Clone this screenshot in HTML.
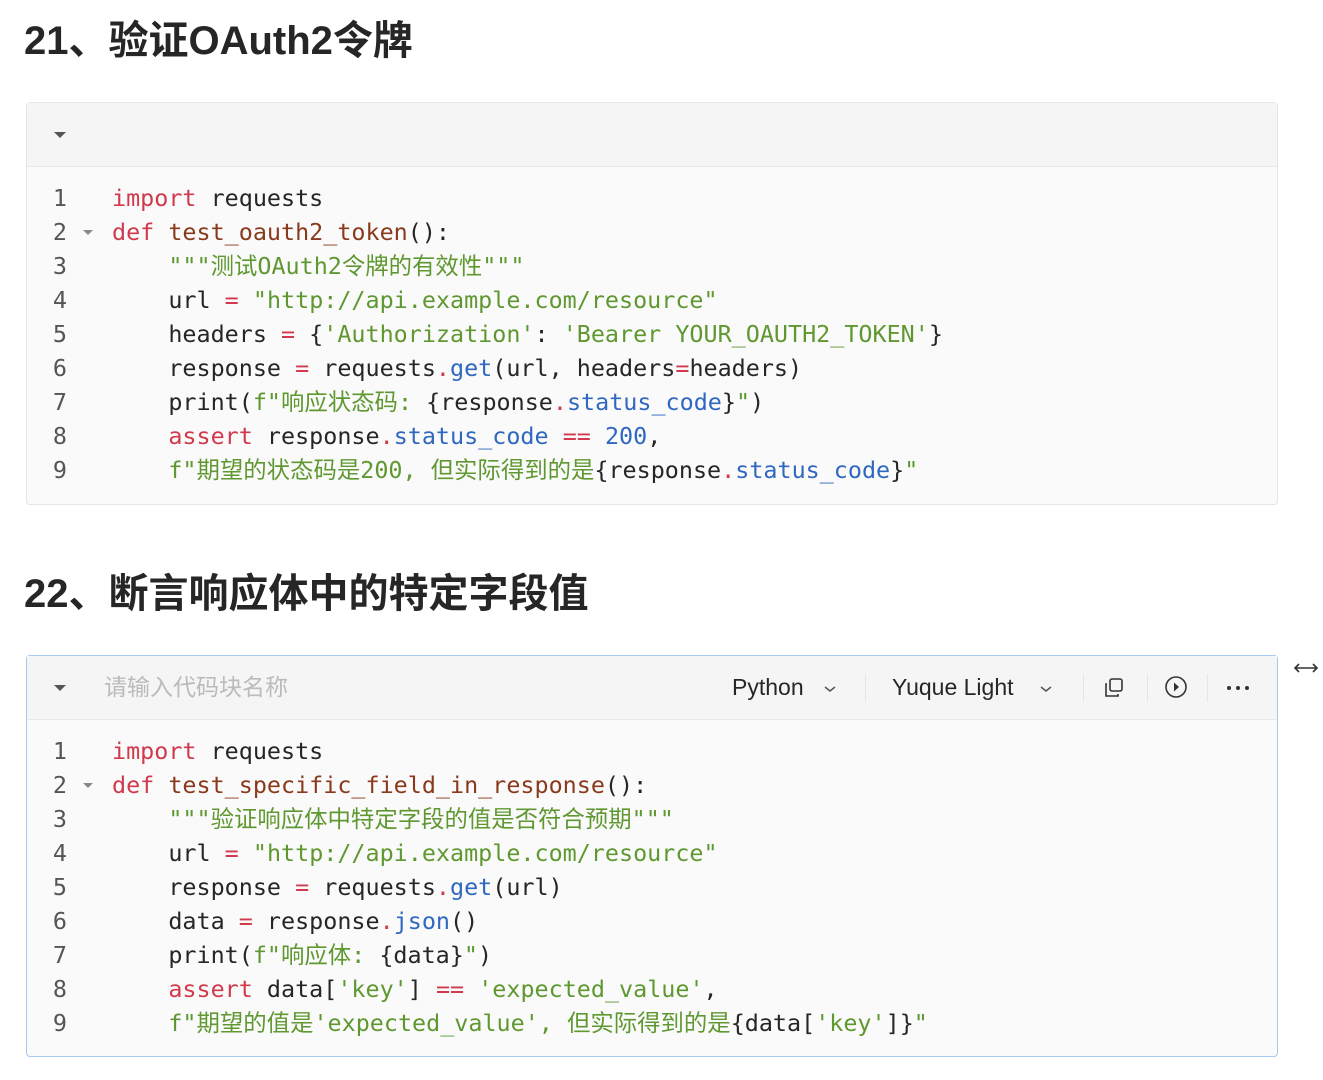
<!DOCTYPE html>
<html><head><meta charset="utf-8"><style>
body{margin:0;background:#fff;width:1323px;height:1080px;position:relative;overflow:hidden;font-family:"Liberation Sans","Noto Sans CJK SC",sans-serif;}
h2{position:absolute;left:24px;margin:0;font-size:40px;font-weight:bold;color:#262626;line-height:1;}
.box{position:absolute;left:26px;width:1250px;border:1px solid #e6e6e6;border-radius:4px;background:#fafafa;}
.box.sel{border-color:#a9c8f0;}
.hd{height:63px;border-bottom:1px solid #e8e8e8;background:#f5f5f5;position:relative;}
.tri{position:absolute;left:27px;top:29px;width:0;height:0;border-left:6px solid transparent;border-right:6px solid transparent;border-top:6px solid #555;}
.code{position:relative;padding-top:14px;font-family:"DejaVu Sans Mono","Noto Sans CJK SC",monospace;font-size:23.4px;color:#262626;}
.ln{height:34px;line-height:34px;white-space:pre;position:relative;}
.n{position:absolute;left:0;width:40px;text-align:right;color:#555;}
.t{position:absolute;left:85px;}
.f{position:absolute;left:56px;top:15px;border-left:5px solid transparent;border-right:5px solid transparent;border-top:5px solid #888;}
.k{color:#d03a4c}.fn{color:#8a3a1c}.s{color:#5f9830}.b{color:#2f68c0}.o{color:#d03a4c}
.tb{position:absolute;top:0;height:63px;line-height:63px;font-size:23px;color:#262626;}
.sep{position:absolute;top:18px;width:1px;height:28px;background:#e5e5e5;}
.chev{position:absolute;top:28px}
</style></head><body>
<h2 style="top:21px">21、验证OAuth2令牌</h2>
<div class="box" style="top:102px;height:401px">
<div class="hd"><div class="tri"></div></div>
<div class="code">
<div class="ln"><span class="n">1</span><span class="t"><span class="k">import</span> requests</span></div>
<div class="ln"><span class="n">2</span><span class="f"></span><span class="t"><span class="k">def</span> <span class="fn">test_oauth2_token</span>():</span></div>
<div class="ln"><span class="n">3</span><span class="t">    <span class="s">"""测试OAuth2令牌的有效性"""</span></span></div>
<div class="ln"><span class="n">4</span><span class="t">    url <span class="o">=</span> <span class="s">"http://api.example.com/resource"</span></span></div>
<div class="ln"><span class="n">5</span><span class="t">    headers <span class="o">=</span> {<span class="s">'Authorization'</span>: <span class="s">'Bearer YOUR_OAUTH2_TOKEN'</span>}</span></div>
<div class="ln"><span class="n">6</span><span class="t">    response <span class="o">=</span> requests<span class="o">.</span><span class="b">get</span>(url, headers<span class="o">=</span>headers)</span></div>
<div class="ln"><span class="n">7</span><span class="t">    print(<span class="s">f"响应状态码: </span>{response<span class="o">.</span><span class="b">status_code</span>}<span class="s">"</span>)</span></div>
<div class="ln"><span class="n">8</span><span class="t">    <span class="k">assert</span> response<span class="o">.</span><span class="b">status_code</span> <span class="o">==</span> <span class="b">200</span>,</span></div>
<div class="ln"><span class="n">9</span><span class="t">    <span class="s">f"期望的状态码是200, 但实际得到的是</span>{response<span class="o">.</span><span class="b">status_code</span>}<span class="s">"</span></span></div>
</div></div>
<h2 style="top:574px">22、断言响应体中的特定字段值</h2>
<div class="box sel" style="top:655px;height:400px">
<div class="hd">
<div class="tri"></div>
<div class="tb" style="left:77px;color:#bbb">请输入代码块名称</div>
<div class="tb" style="left:705px">Python</div>
<svg class="chev" style="left:796px" width="14" height="10" viewBox="0 0 14 10"><path d="M2 3l5 4 5-4" fill="none" stroke="#555" stroke-width="1.5"/></svg>
<div class="sep" style="left:838px"></div>
<div class="tb" style="left:865px">Yuque Light</div>
<svg class="chev" style="left:1012px" width="14" height="10" viewBox="0 0 14 10"><path d="M2 3l5 4 5-4" fill="none" stroke="#555" stroke-width="1.5"/></svg>
<div class="sep" style="left:1056px"></div>
<svg style="position:absolute;left:1076px;top:21px" width="22" height="22" viewBox="0 0 22 22" fill="none" stroke="#333" stroke-width="1.6"><rect x="7" y="2" width="12" height="12" rx="2"/><path d="M4 7H3v12h12v-2"/></svg>
<div class="sep" style="left:1120px"></div>
<svg style="position:absolute;left:1137px;top:19px" width="24" height="24" viewBox="0 0 24 24"><circle cx="12" cy="12" r="10" fill="none" stroke="#333" stroke-width="1.6"/><path d="M10 7.5l5 4.5-5 4.5z" fill="#333"/></svg>
<div class="sep" style="left:1180px"></div>
<svg style="position:absolute;left:1199px;top:29px" width="24" height="6" viewBox="0 0 24 6"><circle cx="3" cy="3" r="2" fill="#333"/><circle cx="12" cy="3" r="2" fill="#333"/><circle cx="21" cy="3" r="2" fill="#333"/></svg>
</div>
<div class="code">
<div class="ln"><span class="n">1</span><span class="t"><span class="k">import</span> requests</span></div>
<div class="ln"><span class="n">2</span><span class="f"></span><span class="t"><span class="k">def</span> <span class="fn">test_specific_field_in_response</span>():</span></div>
<div class="ln"><span class="n">3</span><span class="t">    <span class="s">"""验证响应体中特定字段的值是否符合预期"""</span></span></div>
<div class="ln"><span class="n">4</span><span class="t">    url <span class="o">=</span> <span class="s">"http://api.example.com/resource"</span></span></div>
<div class="ln"><span class="n">5</span><span class="t">    response <span class="o">=</span> requests<span class="o">.</span><span class="b">get</span>(url)</span></div>
<div class="ln"><span class="n">6</span><span class="t">    data <span class="o">=</span> response<span class="o">.</span><span class="b">json</span>()</span></div>
<div class="ln"><span class="n">7</span><span class="t">    print(<span class="s">f"响应体: </span>{data}<span class="s">"</span>)</span></div>
<div class="ln"><span class="n">8</span><span class="t">    <span class="k">assert</span> data[<span class="s">'key'</span>] <span class="o">==</span> <span class="s">'expected_value'</span>,</span></div>
<div class="ln"><span class="n">9</span><span class="t">    <span class="s">f"期望的值是'expected_value', 但实际得到的是</span>{data[<span class="s">'key'</span>]}<span class="s">"</span></span></div>
</div></div>
<svg style="position:absolute;left:1293px;top:661px" width="26" height="14" viewBox="0 0 26 14" fill="none" stroke="#333" stroke-width="1.6"><path d="M2 7h22M6 3L2 7l4 4M20 3l4 4-4 4"/></svg>
</body></html>
